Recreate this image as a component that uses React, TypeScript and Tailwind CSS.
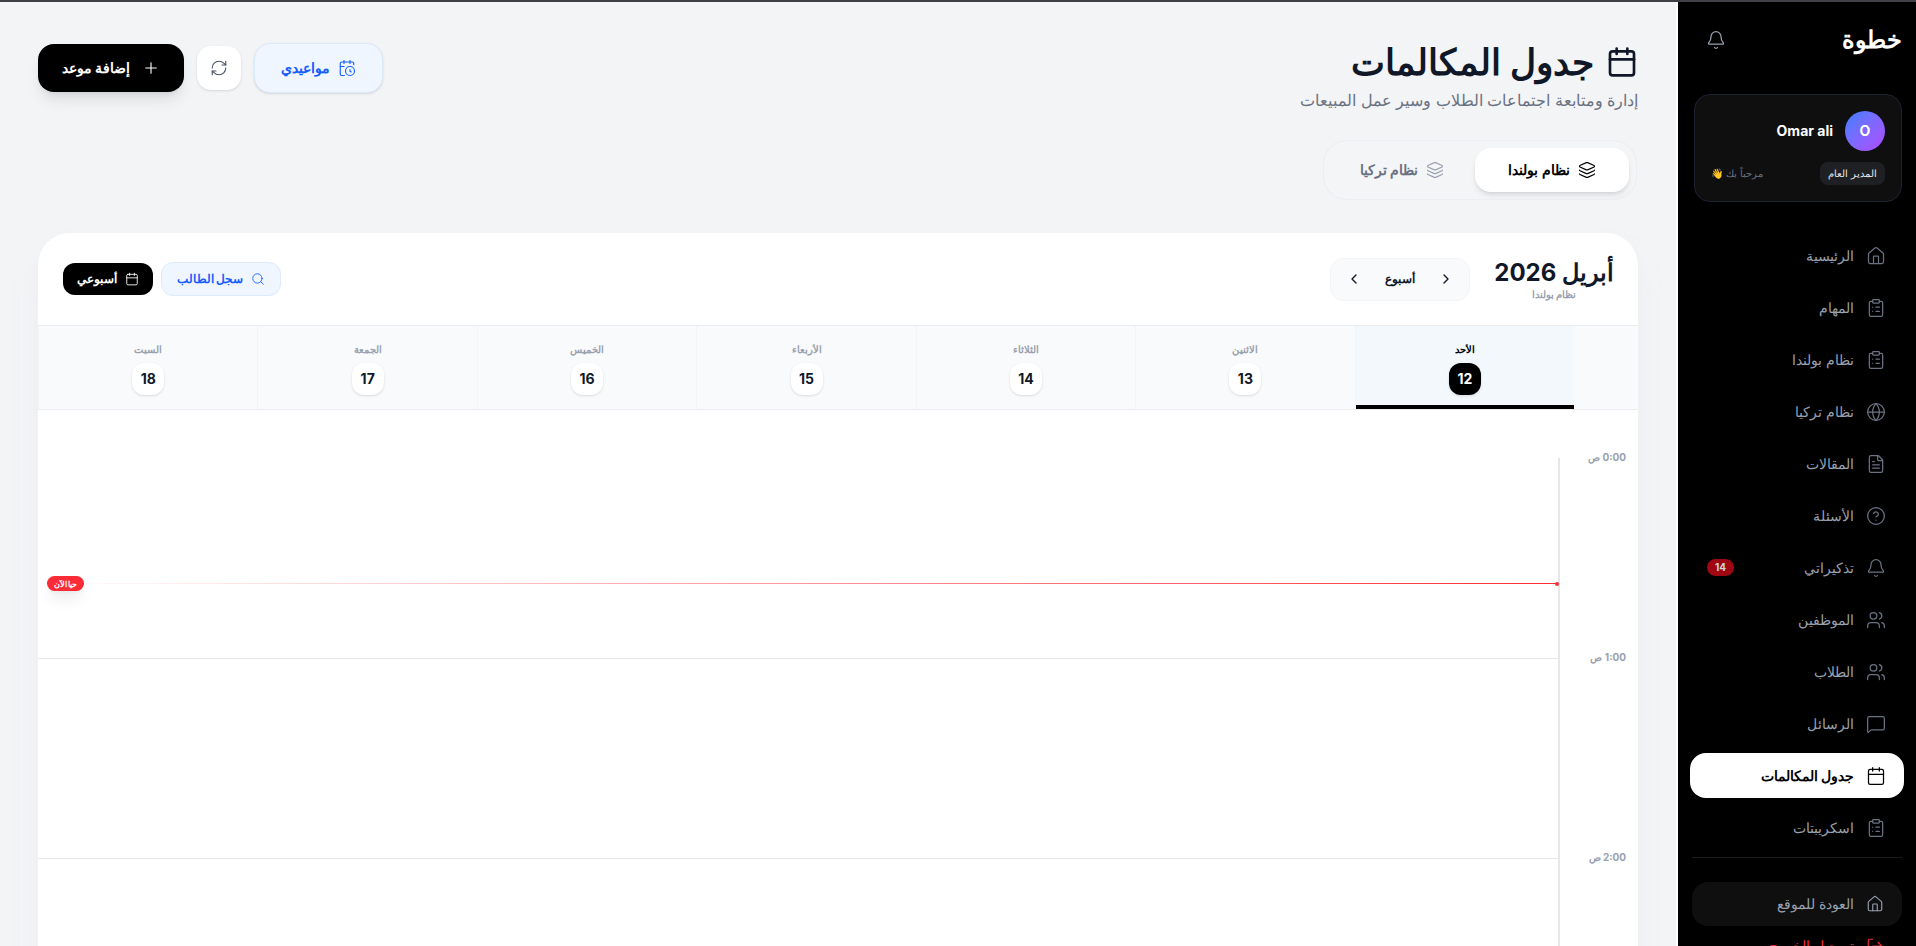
import { Bell, Calendar, CalendarClock, ChevronLeft, ChevronRight, CircleHelp, ClipboardList, FileText, Globe, Home, Layers, LogOut, MessageSquare, Plus, RefreshCw, Search, Users } from 'lucide-react'

const navItems = [
  { label: 'الرئيسية', icon: Home },
  { label: 'المهام', icon: ClipboardList },
  { label: 'نظام بولندا', icon: ClipboardList },
  { label: 'نظام تركيا', icon: Globe },
  { label: 'المقالات', icon: FileText },
  { label: 'الأسئلة', icon: CircleHelp },
  { label: 'تذكيراتي', icon: Bell, badge: 14 },
  { label: 'الموظفين', icon: Users },
  { label: 'الطلاب', icon: Users },
  { label: 'الرسائل', icon: MessageSquare },
  { label: 'جدول المكالمات', icon: Calendar, active: true },
  { label: 'اسكريبتات', icon: ClipboardList },
]

const days = [
  { name: 'الأحد', num: 12, active: true },
  { name: 'الاثنين', num: 13 },
  { name: 'الثلاثاء', num: 14 },
  { name: 'الأربعاء', num: 15 },
  { name: 'الخميس', num: 16 },
  { name: 'الجمعة', num: 17 },
  { name: 'السبت', num: 18 },
]

const hours = ['0:00 ص', '1:00 ص', '2:00 ص']

function Sidebar() {
  return (
    <aside className="w-[238px] shrink-0 h-full bg-black overflow-hidden">
      <div className="h-[92px] flex items-center justify-between pr-[14px] pl-[28px] pb-[17px]">
        <span className="text-white text-2xl font-bold">خطوة</span>
        <Bell className="w-[20px] h-[20px] text-gray-400" strokeWidth={1.5} />
      </div>

      <div className="mr-[14px] ml-[16px] h-[108px] rounded-2xl border border-[#1e2130] bg-[#0f0f10] px-[16px] pt-[16px]">
        <div className="flex items-center gap-3">
          <div className="w-10 h-10 rounded-full bg-gradient-to-br from-blue-500 to-purple-500 flex items-center justify-center text-white font-bold text-sm">O</div>
          <span className="text-white text-sm font-bold">Omar ali</span>
        </div>
        <div className="flex items-center justify-between mt-[11px]">
          <span className="h-[23px] px-2 rounded-lg bg-[#1f2024] text-gray-200 text-[10px] font-medium flex items-center">المدير العام</span>
          <span className="text-gray-500 text-[10px]">مرحباً بك 👋</span>
        </div>
      </div>

      <nav className="mt-[31px] mx-[12px]">
        {navItems.map((item) => (
          <div key={item.label} className={`h-[45px] mb-[7px] rounded-2xl flex items-center gap-3 pr-[18px] pl-[16px] text-sm ${item.active ? 'bg-white text-black font-bold' : 'text-gray-400'}`}>
            <item.icon className={`w-[20px] h-[20px] shrink-0 ${item.active ? 'text-black' : 'text-gray-500'}`} strokeWidth={1.5} />
            <span className="flex-1">{item.label}</span>
            {item.badge && <span className="px-2 h-[19px] flex items-center rounded-full bg-red-800 text-gray-300 text-[10px] font-bold border border-black">{item.badge}</span>}
          </div>
        ))}
      </nav>

      <div className="mx-[14px] mt-[1px] border-t border-[#1c1c1f]" />
      <div className="mx-[14px] mt-[24px] h-[44px] rounded-2xl bg-[#0f0f10] flex items-center gap-3 pr-[18px] text-gray-400 text-sm font-medium">
        <Home className="w-[18px] h-[18px] text-gray-400" strokeWidth={1.5} />
        العودة للموقع
      </div>
      <div className="mx-[14px] mt-[10px] flex items-center gap-3 pr-[18px] text-red-500 text-sm font-medium">
        <LogOut className="w-[18px] h-[18px]" strokeWidth={1.5} />
        تسجيل الخروج
      </div>
    </aside>
  )
}

function Header() {
  return (
    <div className="flex items-start justify-between">
      <div>
        <div className="flex items-center gap-3 h-[44px] mt-[-2px]">
          <Calendar className="w-[32px] h-[32px] text-gray-900" strokeWidth={2} />
          <h1 className="text-4xl font-bold text-gray-900">جدول المكالمات</h1>
        </div>
        <p className="text-gray-500 text-base mt-[4px]">إدارة ومتابعة اجتماعات الطلاب وسير عمل المبيعات</p>
      </div>
      <div className="flex items-center gap-[13px] pt-[1px]">
        <button className="w-[129px] h-[50px] rounded-2xl bg-blue-50 border border-blue-100 text-blue-600 text-sm font-bold flex items-center justify-center gap-2 shadow-sm">
          <CalendarClock className="w-[18px] h-[18px]" strokeWidth={1.5} />
          مواعيدي
        </button>
        <button className="w-[44px] h-[44px] rounded-[14px] bg-white text-gray-600 flex items-center justify-center shadow-sm">
          <RefreshCw className="w-[18px] h-[18px]" strokeWidth={1.5} />
        </button>
        <button className="w-[146px] h-[48px] rounded-2xl bg-black text-white text-sm font-bold flex items-center justify-center gap-3 shadow-lg">
          <Plus className="w-[18px] h-[18px]" strokeWidth={1.5} />
          إضافة موعد
        </button>
      </div>
    </div>
  )
}

function Tabs() {
  return (
    <div className="mt-[28px] flex">
      <div className="w-[314px] h-[60px] mr-[1px] rounded-3xl border border-gray-200/50 bg-[#f4f5f7] flex items-center gap-[2px] px-[7px]">
        <div className="w-[154px] h-[44px] rounded-2xl bg-white text-black text-sm font-bold flex items-center justify-center gap-2 shadow-md">
          <Layers className="w-[18px] h-[18px]" strokeWidth={1.5} />
          نظام بولندا
        </div>
        <div className="flex-1 text-gray-500 text-sm font-bold flex items-center justify-center gap-2">
          <Layers className="w-[18px] h-[18px] text-gray-400" strokeWidth={1.5} />
          نظام تركيا
        </div>
      </div>
    </div>
  )
}

function CalendarCard() {
  return (
    <section className="mt-[33px] rounded-[32px] bg-white shadow-xl shadow-gray-200/50">
      <div className="h-[92px] flex items-center justify-between pr-[24px] pl-[25px]">
        <div className="flex items-center gap-[24px]">
          <div className="text-center">
            <div className="text-2xl font-bold text-gray-900 leading-[30px]">أبريل 2026</div>
            <div className="text-[10px] font-bold text-gray-400 leading-[12px]">نظام بولندا</div>
          </div>
          <div className="w-[140px] h-[43px] rounded-[14px] bg-gray-50 border border-gray-100 flex items-center justify-between px-[15px]">
            <ChevronRight className="w-[16px] h-[16px] text-gray-900" strokeWidth={2} />
            <span className="text-xs font-bold text-gray-900">أسبوع</span>
            <ChevronLeft className="w-[16px] h-[16px] text-gray-900" strokeWidth={2} />
          </div>
        </div>
        <div className="flex items-center gap-2">
          <button className="w-[120px] h-[34px] rounded-xl bg-blue-50 border border-blue-100 text-blue-600 text-xs font-bold flex items-center justify-center gap-2">
            <Search className="w-[14px] h-[14px]" strokeWidth={1.5} />
            سجل الطالب
          </button>
          <button className="w-[90px] h-[32px] rounded-xl bg-black text-white text-xs font-bold flex items-center justify-center gap-2">
            <Calendar className="w-[14px] h-[14px]" strokeWidth={1.5} />
            أسبوعي
          </button>
        </div>
      </div>

      <div className="flex h-[85px] bg-gray-50 border-y border-gray-200/70 pr-[64px]">
        {days.map((d) => (
          <div key={d.num} className={`relative flex-1 flex flex-col items-center pt-[16px] border-l border-gray-100 ${d.active ? 'bg-[#f3f8fc]' : ''}`}>
            <span className={`text-[10px] font-bold leading-[14px] ${d.active ? 'text-black' : 'text-gray-400'}`}>{d.name}</span>
            <span className={`mt-[7px] w-[32px] h-[32px] rounded-xl flex items-center justify-center text-sm font-bold shadow-sm ${d.active ? 'bg-black text-white' : 'bg-white text-gray-900'}`}>{d.num}</span>
            {d.active && <div className="absolute bottom-0 inset-x-0 h-[4px] bg-black" />}
          </div>
        ))}
      </div>

      <div className="relative pt-[48px]">
        {hours.map((h, i) => (
          <div key={h} className="flex h-[200px]">
            <div className="relative w-[80px] shrink-0 border-l-2 border-gray-200">
              <span className="absolute right-[12px] top-[-8px] text-[10px] font-bold text-gray-400">{h}</span>
            </div>
            <div className={`flex-1 ${i > 0 ? 'border-t border-gray-200' : ''}`} />
          </div>
        ))}
        <div className="absolute top-[173px] right-[81px] left-[9px] flex items-center">
          <span className="absolute right-[-2px] w-[4px] h-[4px] rounded-full bg-red-500" />
          <div className="flex-1 h-px bg-gradient-to-l from-red-500 to-transparent" />
          <span className="absolute left-0 w-[37px] h-[15px] rounded-full bg-red-500 text-white text-[8px] font-bold flex items-center justify-center shadow-lg">حيا الآن</span>
        </div>
      </div>
    </section>
  )
}

export default function App() {
  return (
    <div dir="rtl" className="h-screen overflow-hidden flex flex-col bg-gray-100 font-['Inter',sans-serif]">
      <div className="h-[2px] bg-[#3f3f46] shrink-0" />
      <div className="flex-1 flex min-h-0">
        <Sidebar />
        <div className="w-[2px] bg-white shrink-0" />
        <main className="flex-1 min-w-0 overflow-hidden pr-[38px] pl-[38px] pt-[40px]">
          <Header />
          <Tabs />
          <CalendarCard />
        </main>
      </div>
    </div>
  )
}
